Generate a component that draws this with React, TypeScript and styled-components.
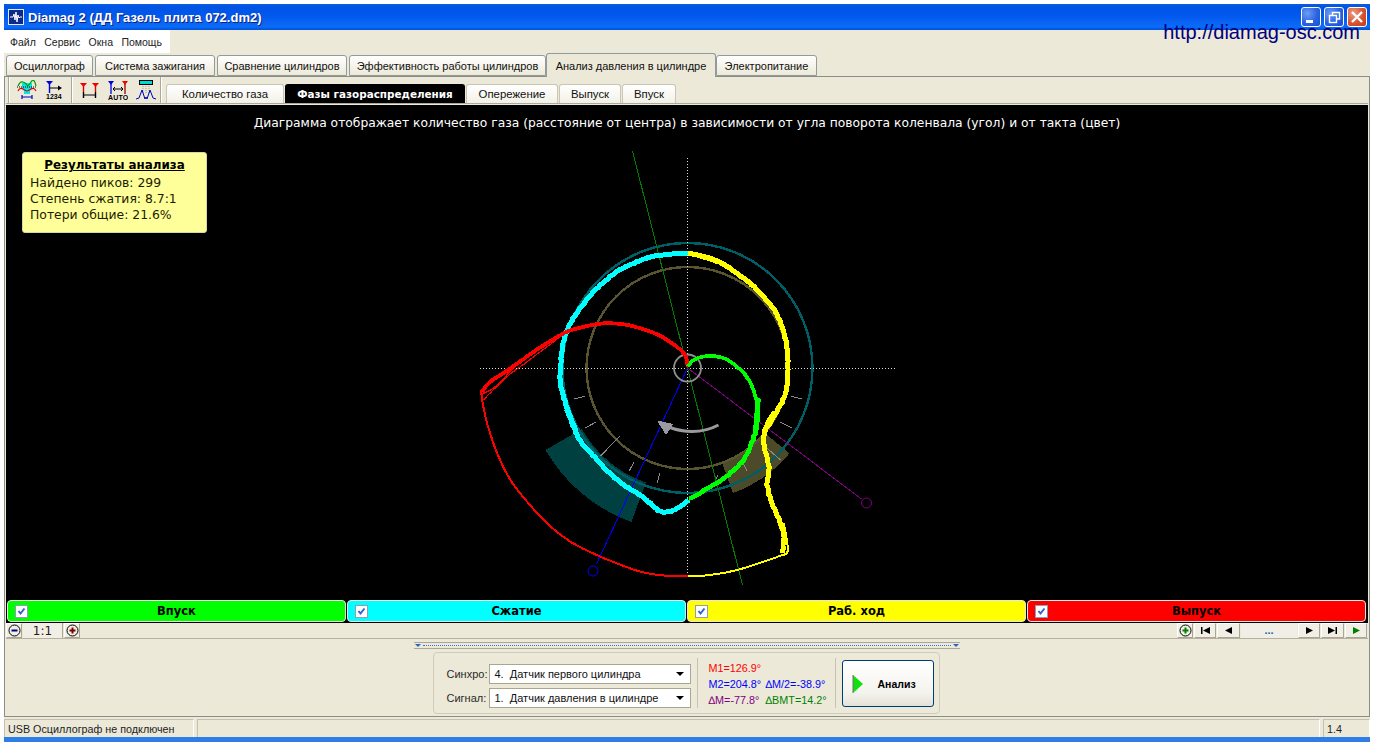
import type { FC } from 'react'
import styled, { createGlobalStyle } from 'styled-components'

const GlobalStyle = createGlobalStyle`
  html, body {
    margin: 0;
    width: 1374px;
    height: 742px;
    overflow: hidden;
    background: #fff;
  }
  * { box-sizing: border-box; }
`

const UI_FONT = `"DejaVu Sans", Verdana, sans-serif`
const SMALL_FONT = `"Liberation Sans", Arial, sans-serif`

const Win = styled.div`
  position: relative;
  margin: 4px 4px 0;
  width: 1366px;
  height: 738px;
  display: flex;
  flex-direction: column;
  background: #ece9d8;
  font-family: ${SMALL_FONT};
  color: #000;
`

const TitleBar = styled.div`
  height: 26px;
  flex: none;
  display: flex;
  align-items: center;
  padding: 0 3px 0 4px;
  gap: 4px;
  background: linear-gradient(180deg, #0a5de0 0%, #0054e3 12%, #0058ee 45%, #0a63f2 70%, #0a6cf8 88%, #0050d8 100%);
`

const TitleText = styled.div`
  flex: 1;
  font: bold 13px ${SMALL_FONT};
  color: #fff;
  text-shadow: 1px 1px 0 #0f1f80;
  white-space: nowrap;
`

const AppIcon = styled.svg`
  width: 16px;
  height: 16px;
  flex: none;
`

const WinButtons = styled.div`
  display: flex;
  gap: 3px;
`

const WinButton = styled.div<{ $close?: boolean }>`
  width: 20px;
  height: 20px;
  border: 1px solid #fff;
  border-radius: 3px;
  background: ${({ $close }) =>
    $close
      ? 'radial-gradient(circle at 30% 30%, #e8a08a, #d8532f 55%, #c23a17)'
      : 'radial-gradient(circle at 30% 30%, #6d9df5, #2a63e0 55%, #1b4fcc)'};
  svg { display: block; width: 18px; height: 18px; }
`

const SiteLink = styled.div`
  position: absolute;
  top: 17px;
  right: 10px;
  font: 20px/23px ${SMALL_FONT};
  color: #000080;
`

const MenuRow = styled.div`
  height: 23px;
  flex: none;
`

const MenuBar = styled.div`
  width: 166px;
  height: 23px;
  background: #fff;
  display: flex;
  align-items: center;
  padding-left: 6px;
  gap: 8.4px;
  font: 10.5px ${SMALL_FONT};
  color: #222;
`

const TabRow = styled.div`
  height: 23px;
  flex: none;
  display: flex;
  align-items: flex-end;
  padding-left: 2px;
  gap: 2px;
  position: relative;
  z-index: 1;
`

const Tab = styled.div<{ $active?: boolean; $w: number }>`
  width: ${({ $w }) => $w}px;
  height: ${({ $active }) => ($active ? '24px' : '21px')};
  margin-bottom: ${({ $active }) => ($active ? '-1px' : '0')};
  margin-left: ${({ $active }) => ($active ? '-2px' : '0')};
  margin-right: ${({ $active }) => ($active ? '-2px' : '0')};
  display: flex;
  align-items: center;
  justify-content: center;
  font: 11px ${SMALL_FONT};
  color: #111;
  white-space: nowrap;
  border: 1px solid #919b9c;
  border-bottom: ${({ $active }) => ($active ? 'none' : '1px solid #919b9c')};
  border-radius: 3px 3px 0 0;
  background: ${({ $active }) => ($active ? '#ece9d8' : 'linear-gradient(180deg, #fff, #f4f2e8 60%, #ece9d8)')};
`

const Panel = styled.div`
  flex: 1;
  min-height: 0;
  display: flex;
  flex-direction: column;
  border: 1px solid #8c8c88;
  padding: 0 1px;
`

const Toolbar = styled.div`
  height: 27px;
  flex: none;
  display: flex;
  align-items: flex-end;
  border-bottom: 1px solid #aca899;
  padding-left: 2px;
`

const ToolGroup = styled.div<{ $w: number }>`
  width: ${({ $w }) => $w}px;
  height: 26px;
  display: flex;
  align-items: center;
  gap: 8px;
  padding-left: 8px;
  border-left: 1px solid #aca899;
  box-shadow: inset 1px 0 0 #fff;
`

const ToolEnd = styled.div`
  width: 2px;
  height: 26px;
  border-left: 1px solid #aca899;
  box-shadow: inset 1px 0 0 #fff;
`

const ToolIcon = styled.svg`
  width: 20px;
  height: 20px;
  flex: none;
`

const SubTabs = styled.div`
  display: flex;
  align-items: flex-end;
  height: 26px;
  gap: 1px;
  margin-left: 4px;
`

const SubTab = styled.div<{ $active?: boolean; $w: number }>`
  width: ${({ $w }) => $w}px;
  height: 19px;
  display: flex;
  align-items: center;
  justify-content: center;
  font: ${({ $active }) => ($active ? 'bold 10.4px' : '11.4px')} ${({ $active }) => ($active ? UI_FONT : SMALL_FONT)};
  color: ${({ $active }) => ($active ? '#fff' : '#111')};
  border: 1px solid ${({ $active }) => ($active ? '#000' : '#c9c6b6')};
  border-bottom: none;
  border-radius: 3px 3px 0 0;
  background: ${({ $active }) => ($active ? '#000' : 'linear-gradient(180deg, #fff, #f3f1e7)')};
  white-space: nowrap;
`

const Screen = styled.div`
  margin-top: 1px;
  height: 518px;
  flex: none;
  background: #000;
  display: flex;
  flex-direction: column;
`

const ChartArea = styled.div`
  position: relative;
  height: 494px;
  flex: none;
`

const ChartSvg = styled.svg`
  position: absolute;
  inset: 0;
  width: 100%;
  height: 100%;
`

const Caption = styled.div`
  position: relative;
  padding-top: 11px;
  text-align: center;
  font: 12.3px/14px ${UI_FONT};
  color: #fff;
`

const ResultCard = styled.div`
  position: absolute;
  left: 16px;
  top: 47px;
  width: 185px;
  height: 81px;
  padding: 4px 7px;
  background: #ffff99;
  border: 1px solid #d8d8a0;
  border-radius: 3px;
  font: 12.4px/16px ${UI_FONT};
  color: #1c1c00;
`

const ResultTitle = styled.div`
  font: bold 11.9px/16px ${UI_FONT};
  text-decoration: underline;
  text-align: center;
  margin-bottom: 2px;
  color: #000;
`

const Bars = styled.div`
  display: grid;
  grid-template-columns: repeat(4, 1fr);
  gap: 1px;
  padding: 1px 2px 1px 1px;
  height: 24px;
`

const Bar = styled.div<{ $color: string }>`
  position: relative;
  display: flex;
  align-items: center;
  justify-content: center;
  background: ${({ $color }) => $color};
  border: 1px solid #e8e8e0;
  border-radius: 4px;
  font: bold 11.5px ${UI_FONT};
  color: #000;
`

const CheckBox = styled.span`
  position: absolute;
  left: 7px;
  top: 4px;
  width: 13px;
  height: 13px;
  background: #fff;
  border: 1px solid #8f9db5;
  svg { display: block; width: 11px; height: 11px; }
`

const NavRow = styled.div`
  height: 16px;
  flex: none;
  display: flex;
  align-items: flex-start;
  border-bottom: 1px solid #b5b19e;
`

const NavButton = styled.div<{ $w: number }>`
  width: ${({ $w }) => $w}px;
  height: 15px;
  flex: none;
  display: flex;
  align-items: center;
  justify-content: center;
  background: #f1efe5;
  border-right: 1px solid #a9a693;
  border-bottom: 1px solid #a9a693;
  border-top: 1px solid #fff;
  border-left: 1px solid #fff;
  margin-right: 1px;
  svg { display: block; }
`

const Ratio = styled.div`
  width: 40px;
  height: 15px;
  margin-right: 1px;
  text-align: center;
  font: 12px/17px ${UI_FONT};
  color: #2a1a1a;
  background: #f1efe5;
  border-right: 1px solid #a9a693;
`

const Spacer = styled.div`
  flex: 1;
`

const Dots = styled.div`
  width: 56px;
  height: 15px;
  text-align: center;
  font: bold 11px/15px ${SMALL_FONT};
  color: #1a5fb4;
  background: #f1efe5;
  margin-right: 1px;
`

const Lower = styled.div`
  flex: 1;
  min-height: 0;
  display: flex;
  flex-direction: column;
  align-items: center;
  padding-top: 3px;
`

const Splitter = styled.div`
  width: 546px;
  height: 7px;
  flex: none;
  margin-left: -1px;
  border-top: 1px solid #aca899;
  border-bottom: 1px solid #aca899;
  display: flex;
  align-items: center;
  justify-content: space-between;
  padding: 0 1px;
`

const SplitterDots = styled.div`
  flex: 1;
  height: 0;
  margin: 0 2px;
  border-top: 1px dotted #3a6fd8;
`

const Tri = styled.span`
  width: 0;
  height: 0;
  border-left: 3px solid transparent;
  border-right: 3px solid transparent;
  border-top: 3px solid #2a62c8;
`

const Group = styled.div`
  margin-top: 3px;
  margin-left: -2px;
  width: 507px;
  height: 62px;
  flex: none;
  display: flex;
  align-items: center;
  padding: 0 5px 0 13px;
  border: 1px solid #cfccbb;
  border-radius: 4px;
`

const Selects = styled.div`
  display: grid;
  grid-template-columns: 42px 202px;
  row-gap: 4px;
  align-items: center;
  margin-top: 5px;
  font: 11px ${SMALL_FONT};
  color: #2a2a2a;
`

const Select = styled.div`
  height: 20px;
  display: flex;
  align-items: center;
  justify-content: space-between;
  padding: 0 6px 0 5px;
  background: #fff;
  border: 1px solid #a9a693;
  font: 11px ${SMALL_FONT};
  color: #111;
  white-space: pre;
`

const Caret = styled.span`
  width: 0;
  height: 0;
  border-left: 4px solid transparent;
  border-right: 4px solid transparent;
  border-top: 4px solid #000;
`

const VSep = styled.div<{ $ml?: number }>`
  width: 1px;
  height: 50px;
  margin-left: ${({ $ml }) => $ml ?? 0}px;
  background: #c6c3b2;
  flex: none;
`

const Readouts = styled.div`
  width: 137px;
  flex: none;
  margin-top: 2px;
  padding-left: 11px;
  font: 10.8px/16px ${SMALL_FONT};
  white-space: nowrap;
`

const ReadRow = styled.div`
  display: grid;
  grid-template-columns: 57px auto;
`

const Read = styled.span<{ $color: string }>`
  color: ${({ $color }) => $color};
`

const RunButton = styled.div`
  width: 92px;
  height: 47px;
  margin-left: 6px;
  margin-top: 1px;
  flex: none;
  display: flex;
  align-items: center;
  padding-left: 9px;
  gap: 14px;
  font: bold 10.5px ${SMALL_FONT};
  border: 1px solid #003c74;
  border-radius: 3px;
  background: linear-gradient(180deg, #fff, #f4f3ee 70%, #e4e1d6);
`

const StatusBar = styled.div`
  height: 20px;
  flex: none;
  display: flex;
  gap: 3px;
  padding-top: 2px;
`

const StatusCell = styled.div<{ $w?: number }>`
  ${({ $w }) => ($w ? `width: ${$w}px; flex: none;` : 'flex: 1;')}
  display: flex;
  align-items: center;
  padding-left: 3px;
  font: 10.75px ${SMALL_FONT};
  color: #222;
  border-top: 1px solid #c3c0ae;
  border-left: 1px solid #c3c0ae;
  border-right: 1px solid #fff;
`

const BottomEdge = styled.div`
  height: 5px;
  flex: none;
  background: #2f7de6;
`

// chart pixels follow the reference screenshot, so viewBox is in page coordinates
const CX = 687
const CY = 368

type Pt = [number, number]

// zoomed crops were taken at 3x from (460,140) and (460,380)
const upper = (pts: Pt[]): Pt[] => pts.map(([x, y]) => [460 + x / 3, 140 + y / 3])
const lower = (pts: Pt[]): Pt[] => pts.map(([x, y]) => [460 + x / 3, 380 + y / 3])

// catmull-rom through the points, with a small fixed wobble so the trace looks sampled
const trace = (pts: Pt[], wobble = 0.6): string => {
  const out: string[] = []
  for (let i = 0; i < pts.length - 1; i++) {
    const p0 = pts[Math.max(i - 1, 0)]
    const p1 = pts[i]
    const p2 = pts[i + 1]
    const p3 = pts[Math.min(i + 2, pts.length - 1)]
    const steps = Math.max(2, Math.round(Math.hypot(p2[0] - p1[0], p2[1] - p1[1]) / 3))
    for (let s = 0; s < steps; s++) {
      const t = s / steps
      const f = (a: number, b: number, c: number, d: number) =>
        0.5 * (2 * b + (c - a) * t + (2 * a - 5 * b + 4 * c - d) * t * t + (3 * b - a - 3 * c + d) * t * t * t)
      const n = out.length
      const jx = wobble * Math.sin(n * 2.7) * Math.cos(n * 0.9)
      const jy = wobble * Math.cos(n * 1.9) * Math.sin(n * 1.3)
      out.push(`${(f(p0[0], p1[0], p2[0], p3[0]) + jx).toFixed(1)} ${(f(p0[1], p1[1], p2[1], p3[1]) + jy).toFixed(1)}`)
    }
  }
  const last = pts[pts.length - 1]
  out.push(`${last[0].toFixed(1)} ${last[1].toFixed(1)}`)
  return `M${out.join('L')}`
}

const sector = (r1: number, r2: number, a1: number, a2: number): string => {
  const p = (r: number, a: number) => {
    const t = (a * Math.PI) / 180
    return `${(CX + r * Math.cos(t)).toFixed(1)} ${(CY + r * Math.sin(t)).toFixed(1)}`
  }
  return `M${p(r1, a1)}A${r1} ${r1} 0 0 1 ${p(r1, a2)}L${p(r2, a2)}A${r2} ${r2} 0 0 0 ${p(r2, a1)}Z`
}

const CYAN = trace([
  ...upper([[682, 341], [600, 345], [530, 365], [470, 395], [420, 435], [370, 490], [330, 550], [310, 600], [300, 680], [300, 730], [318, 800], [345, 870]]),
  ...lower([[320, 90], [355, 175], [410, 240], [470, 300], [530, 340], [570, 370], [600, 395], [630, 395], [660, 378], [685, 360]]),
])
const YELLOW_THICK = trace([
  ...upper([[682, 340], [760, 360], [830, 400], [900, 460], [950, 525], [975, 600], [982, 680], [975, 760], [945, 820], [915, 870]]),
  ...lower([[940, 100], [915, 145], [910, 190], [925, 260], [920, 315], [935, 370], [960, 430], [970, 470], [965, 520]]),
])
const YELLOW_EDGE = trace(upper([[682, 334], [760, 352], [830, 393], [900, 453], [955, 528], [980, 610]]), 0.3)
const YELLOW_THIN = trace(lower([[970, 430], [982, 512], [960, 527], [900, 548], [830, 570], [750, 585], [682, 588]]), 0.1)
const RED_THIN = trace(lower([[682, 588], [630, 588], [540, 575], [420, 530], [330, 485], [260, 430], [200, 365], [150, 300], [110, 220], [80, 130], [65, 60], [62, 30]]), 0.1)
const RED_THICK = trace(upper([[65, 755], [90, 725], [150, 685], [220, 635], [300, 585], [350, 565], [430, 550], [500, 555], [570, 575], [620, 600], [670, 640], [682, 680]]), 0.2)
const RED_TIP_A = trace(upper([[68, 780], [140, 710], [200, 665], [300, 590]]), 0.2)
const RED_TIP_B = trace(upper([[62, 765], [110, 735], [190, 655], [310, 578]]), 0.2)
const GREEN_TOP = trace(upper([[682, 680], [700, 660], [740, 648], [790, 655], [830, 680], [865, 720], [885, 770], [893, 820]]), 0.2)
const GREEN_LOW = trace([
  ...upper([[893, 820], [885, 880]]),
  ...lower([[893, 60], [890, 120], [880, 170], [855, 230], [810, 280], [750, 320], [710, 345], [685, 355]]),
], 0.8)

const TICKS: [Pt, Pt][] = [
  ...[
    [[340, 777], [372, 769]],
    [[372, 865], [405, 847]],
    [[1025, 777], [993, 769]],
    [[993, 863], [960, 847]],
  ].map((t) => upper(t as Pt[]) as [Pt, Pt]),
  ...[
    [[420, 228], [478, 168]],
    [[505, 275], [520, 247]],
    [[590, 310], [598, 280]],
    [[848, 250], [860, 275]],
    [[768, 296], [772, 284]],
    [[920, 205], [960, 240]],
  ].map((t) => lower(t as Pt[]) as [Pt, Pt]),
]

const Chart: FC = () => (
  <ChartSvg viewBox="6 105 1361 494" shapeRendering="crispEdges" fill="none">
    <path d={sector(122, 164, 110, 150)} fill="#004040" />
    <path d={sector(100, 133, 40, 70)} fill="#4c4a28" />
    <circle cx={CX} cy={CY} r={125} stroke="#005f66" strokeWidth={2.4} />
    <circle cx={CX} cy={CY} r={101} stroke="#5a5530" strokeWidth={2.4} />
    {TICKS.map(([a, b], i) => (
      <line key={i} x1={a[0]} y1={a[1]} x2={b[0]} y2={b[1]} stroke="#8a8a8a" />
    ))}
    <line x1={479} y1={CY} x2={894} y2={CY} stroke="#ddd" strokeDasharray="1 2" />
    <line x1={CX} y1={158} x2={CX} y2={578} stroke="#ddd" strokeDasharray="1 2" />
    <line x1={632} y1={151} x2={742} y2={585} stroke="#008000" />
    <line x1={CX} y1={CY} x2={596} y2={564} stroke="#0000ff" />
    <circle cx={592.5} cy={571} r={5} stroke="#0000ff" shapeRendering="auto" />
    <line x1={CX} y1={CY} x2={861} y2={499} stroke="#800080" />
    <circle cx={866} cy={503} r={5} stroke="#800080" shapeRendering="auto" />
    <path d="M718 425Q695 437 668 427" stroke="#9a9a9e" strokeWidth={3} shapeRendering="auto" />
    <path d="M656.5 420.5L673 424L665.5 435Z" fill="#9a9a9e" />
    <circle cx={CX} cy={CY} r={13.5} stroke="#8f8f8f" strokeWidth={1.8} shapeRendering="auto" />
    <path d={CYAN} stroke="#00ffff" strokeWidth={5} strokeLinejoin="round" />
    <path d={YELLOW_THICK} stroke="#ffff00" strokeWidth={5} strokeLinejoin="round" />
    <path d={YELLOW_EDGE} stroke="#ffff00" strokeWidth={1.2} />
    <path d={YELLOW_THIN} stroke="#ffff00" strokeWidth={2} />
    <path d={RED_THIN} stroke="#ff0000" strokeWidth={2} />
    <path d={RED_THICK} stroke="#ff0000" strokeWidth={3.8} />
    <path d={RED_TIP_A} stroke="#ff0000" strokeWidth={1.2} />
    <path d={RED_TIP_B} stroke="#ff0000" strokeWidth={1.2} />
    <path d={GREEN_TOP} stroke="#00ff00" strokeWidth={3.6} strokeLinejoin="round" />
    <path d={GREEN_LOW} stroke="#00ff00" strokeWidth={4.6} strokeLinejoin="round" />
  </ChartSvg>
)

const ScopeIcon: FC = () => (
  <ToolIcon viewBox="0 0 20 20" fill="none">
    <path d="M5 3H15V8L13 11V14H7V11L5 8Z" fill="#00e8e8" />
    <path d="M1 6Q3 1 6 2T10 5T14 2T19 6" stroke="#00a000" strokeWidth={1.2} />
    <path d="M0 7H20" stroke="#000" strokeDasharray="1 1" />
    <path d="M1 11Q3 7 6 9T10 11T14 9T19 11" stroke="#e00000" strokeWidth={1.2} />
    <path d="M5 15V19M15 15V19M5 17H15" stroke="#0000c0" strokeWidth={1.2} />
  </ToolIcon>
)

const CountIcon: FC = () => (
  <ToolIcon viewBox="0 0 20 20" fill="none">
    <path d="M1 1H8L4.5 5Z" fill="#0000e0" />
    <path d="M4.5 4V13" stroke="#0000e0" strokeWidth={1.4} />
    <path d="M5 8H15" stroke="#000" />
    <path d="M13 5.5L17 8L13 10.5Z" fill="#000" />
    <text x="1" y="19" fontFamily="Liberation Sans" fontSize="7" fontWeight="bold" fill="#000">1234</text>
  </ToolIcon>
)

const SpanIcon: FC = () => (
  <ToolIcon viewBox="0 0 20 20" fill="none">
    <path d="M0 3H7L3.5 7ZM12 3H19L15.5 7Z" fill="#f00000" />
    <path d="M3.5 6V12" stroke="#e00000" strokeWidth={1.4} />
    <path d="M15.5 6V12" stroke="#e00000" strokeWidth={1.4} />
    <path d="M3.5 12V18M15.5 12V18" stroke="#000" strokeWidth={1.4} />
    <path d="M3 15H16" stroke="#000" />
  </ToolIcon>
)

const AutoIcon: FC = () => (
  <ToolIcon viewBox="0 0 20 20" fill="none">
    <path d="M0 1H6L3 5Z" fill="#0000e0" />
    <path d="M14 1H20L17 5Z" fill="#f00000" />
    <path d="M3 4V14" stroke="#0000e0" strokeWidth={1.3} />
    <path d="M17 4V14" stroke="#a00000" strokeWidth={1.3} />
    <path d="M5 9H15M7 7L5 9L7 11M13 7L15 9L13 11" stroke="#000" />
    <text x="0" y="20" fontFamily="Liberation Sans" fontSize="7" fontWeight="bold" fill="#000" letterSpacing="0.2">AUTO</text>
  </ToolIcon>
)

const PeaksIcon: FC = () => (
  <ToolIcon viewBox="0 0 20 20" fill="none">
    <rect x="3.5" y="0.5" width="13" height="4" fill="#00d8d8" stroke="#000" />
    <path d="M7 6V14M10 6V14M13 6V14" stroke="#999" strokeDasharray="1 1" />
    <path d="M0 19L3 18L6 10L9 19L10 17L11 19L14 10L17 18L20 19" stroke="#0000c0" />
  </ToolIcon>
)

const Check: FC = () => (
  <svg viewBox="0 0 11 11" fill="none">
    <path d="M2.5 5L4.5 7.5L8.5 2.5" stroke="#3560d0" strokeWidth={2} />
  </svg>
)

const Zoom: FC<{ color: string; plus?: boolean }> = ({ color, plus }) => (
  <svg width="13" height="13" viewBox="0 0 13 13" fill="none">
    <circle cx="6.5" cy="6.5" r="5.5" stroke="#000" />
    <path d={plus ? 'M3.5 6.5H9.5M6.5 3.5V9.5' : 'M3.5 6.5H9.5'} stroke={color} strokeWidth={2} />
  </svg>
)

const Arrow: FC<{ kind: 'first' | 'prev' | 'next' | 'last' | 'play' }> = ({ kind }) => {
  const paths = {
    first: 'M2 2H3.5V9H2ZM11 2V9L4 5.5Z',
    prev: 'M10 2V9L3 5.5Z',
    next: 'M3 2V9L10 5.5Z',
    last: 'M11 2H9.5V9H11ZM2 2V9L9 5.5Z',
    play: 'M3 2V9L10 5.5Z',
  }
  return (
    <svg width="13" height="11" viewBox="0 0 13 11">
      <path d={paths[kind]} fill={kind === 'play' ? '#008000' : '#000'} />
    </svg>
  )
}

const BARS = [
  { label: 'Впуск', color: '#00ff00' },
  { label: 'Сжатие', color: '#00ffff' },
  { label: 'Раб. ход', color: '#ffff00' },
  { label: 'Выпуск', color: '#ff0000' },
]

const App: FC = () => (
  <>
    <GlobalStyle />
    <Win>
      <TitleBar>
        <AppIcon viewBox="0 0 16 16" fill="none">
          <rect x="0.5" y="0.5" width="15" height="15" fill="#0c2a8a" stroke="#dfe8ff" />
          <path d="M2 8H5L6 5L7 11L8 3L9 13L10 6L11 9L12 8H14" stroke="#fff" />
        </AppIcon>
        <TitleText>Diamag 2 (ДД Газель плита 072.dm2)</TitleText>
        <WinButtons>
          <WinButton>
            <svg viewBox="0 0 18 18">
              <rect x="4" y="12" width="7" height="3" fill="#fff" />
            </svg>
          </WinButton>
          <WinButton>
            <svg viewBox="0 0 18 18" fill="none" stroke="#fff">
              <rect x="4.5" y="7.5" width="7" height="7" strokeWidth="1.4" />
              <path d="M7.5 7V4.5H14.5V11H12" strokeWidth="1.4" />
            </svg>
          </WinButton>
          <WinButton $close>
            <svg viewBox="0 0 18 18" fill="none" stroke="#fff">
              <path d="M4 4L14 14M14 4L4 14" strokeWidth="2.4" />
            </svg>
          </WinButton>
        </WinButtons>
      </TitleBar>
      <SiteLink>http://diamag-osc.com</SiteLink>
      <MenuRow>
        <MenuBar>
          <span>Файл</span>
          <span>Сервис</span>
          <span>Окна</span>
          <span>Помощь</span>
        </MenuBar>
      </MenuRow>
      <TabRow>
        <Tab $w={87}>Осциллограф</Tab>
        <Tab $w={120}>Система зажигания</Tab>
        <Tab $w={130}>Сравнение цилиндров</Tab>
        <Tab $w={197}>Эффективность работы цилиндров</Tab>
        <Tab $w={170} $active>Анализ давления в цилиндре</Tab>
        <Tab $w={101}>Электропитание</Tab>
      </TabRow>
      <Panel>
        <Toolbar>
          <ToolGroup $w={63}>
            <ScopeIcon />
            <CountIcon />
          </ToolGroup>
          <ToolGroup $w={89}>
            <SpanIcon />
            <AutoIcon />
            <PeaksIcon />
          </ToolGroup>
          <ToolEnd />
          <SubTabs>
            <SubTab $w={118}>Количество газа</SubTab>
            <SubTab $w={180} $active>Фазы газораспределения</SubTab>
            <SubTab $w={92}>Опережение</SubTab>
            <SubTab $w={62}>Выпуск</SubTab>
            <SubTab $w={54}>Впуск</SubTab>
          </SubTabs>
        </Toolbar>
        <Screen>
          <ChartArea>
            <Chart />
            <Caption>Диаграмма отображает количество газа (расстояние от центра) в зависимости от угла поворота коленвала (угол) и от такта (цвет)</Caption>
            <ResultCard>
              <ResultTitle>Результаты анализа</ResultTitle>
              <div>Найдено пиков: 299</div>
              <div>Степень сжатия: 8.7:1</div>
              <div>Потери общие: 21.6%</div>
            </ResultCard>
          </ChartArea>
          <Bars>
            {BARS.map((b) => (
              <Bar key={b.label} $color={b.color}>
                <CheckBox>
                  <Check />
                </CheckBox>
                {b.label}
              </Bar>
            ))}
          </Bars>
        </Screen>
        <NavRow>
          <NavButton $w={16}>
            <Zoom color="#000080" />
          </NavButton>
          <Ratio>1:1</Ratio>
          <NavButton $w={16}>
            <Zoom color="#800000" plus />
          </NavButton>
          <Spacer />
          <NavButton $w={16}>
            <Zoom color="#008000" plus />
          </NavButton>
          <NavButton $w={22}>
            <Arrow kind="first" />
          </NavButton>
          <NavButton $w={23}>
            <Arrow kind="prev" />
          </NavButton>
          <Dots>...</Dots>
          <NavButton $w={22}>
            <Arrow kind="next" />
          </NavButton>
          <NavButton $w={23}>
            <Arrow kind="last" />
          </NavButton>
          <NavButton $w={22}>
            <Arrow kind="play" />
          </NavButton>
        </NavRow>
        <Lower>
          <Splitter>
            <Tri />
            <SplitterDots />
            <Tri />
          </Splitter>
          <Group>
            <Selects>
              <span>Синхро:</span>
              <Select>
                4.  Датчик первого цилиндра
                <Caret />
              </Select>
              <span>Сигнал:</span>
              <Select>
                1.  Датчик давления в цилиндре
                <Caret />
              </Select>
            </Selects>
            <VSep $ml={6} />
            <Readouts>
              <ReadRow>
                <Read $color="#ff0000">M1=126.9°</Read>
              </ReadRow>
              <ReadRow>
                <Read $color="#0000ff">M2=204.8°</Read>
                <Read $color="#0000ff">∆M/2=-38.9°</Read>
              </ReadRow>
              <ReadRow>
                <Read $color="#800080">∆M=-77.8°</Read>
                <Read $color="#008000">∆BMT=14.2°</Read>
              </ReadRow>
            </Readouts>
            <VSep />
            <RunButton>
              <svg width="12" height="18" viewBox="0 0 12 18">
                <path d="M1 0L11 9L1 18Z" fill="#10e010" />
                <path d="M1 0V18" stroke="#707070" />
              </svg>
              Анализ
            </RunButton>
          </Group>
        </Lower>
      </Panel>
      <StatusBar>
        <StatusCell $w={190}>USB Осциллограф не подключен</StatusCell>
        <StatusCell />
        <StatusCell $w={47}>1.4</StatusCell>
      </StatusBar>
      <BottomEdge />
    </Win>
  </>
)

export default App
